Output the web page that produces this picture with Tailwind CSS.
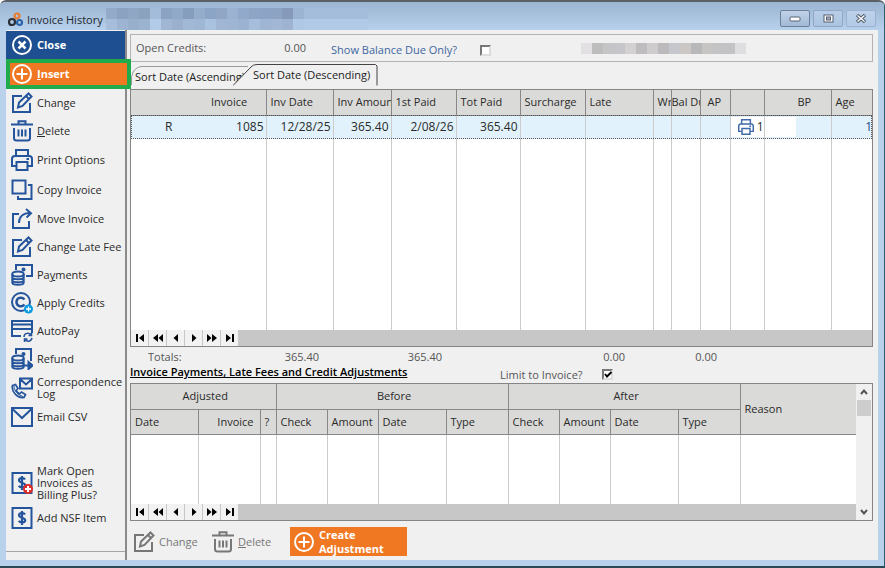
<!DOCTYPE html>
<html lang="en">
<head>
<meta charset="utf-8">
<title>Invoice History</title>
<script src="https://cdn.jsdelivr.net/npm/@tailwindcss/browser@4"></script>
</head>
<body class="font-['Open_Sans','Noto_Sans',sans-serif] text-[11px] leading-4 text-[#2a2a2a]">
<svg class="hidden" aria-hidden="true">
  <symbol id="i-edit" viewBox="0 0 22 22"><path d="M11 4H2v16h17v-9" /><path d="M7 15.500l1-5L17.500 1.500l3 3-9 9.500zM15 4l3 3" stroke-width="2"/></symbol>
  <symbol id="i-trash" viewBox="0 0 22 22"><path d="M0 4.500h22M7.500 4V1.200h7V4M3 8v10q0 2.500 2.500 2.500h11q2.500 0 2.500-2.500V8M7.500 9.500v7M11 9.500v7M14.500 9.500v7"/></symbol>
  <symbol id="i-print" viewBox="0 0 22 22"><path d="M5 6V1h12v5M5 17H1V10q0-3 3-3h14q3 0 3 3v7h-4M5.500 13h11v8h-11zM15.500 10h2.500"/></symbol>
  <symbol id="i-copy" viewBox="0 0 22 22"><path d="M1.500 1.500h13v13h-13zM17 6h3.500v14H7v-3"/></symbol>
  <symbol id="i-move" viewBox="0 0 22 22"><path d="M8 6H2v14h16v-7M8 15c0-6 4-10 11-10M15 1l5 4.200L15.500 9.500"/></symbol>
  <symbol id="i-coins" viewBox="0 0 22 22"><ellipse cx="7" cy="10" rx="5.700" ry="2.500"/><path d="M1.300 10v8.500c0 3 11.400 3 11.400 0V10M1.300 13c0 3 11.400 3 11.400 0M1.300 16c0 3 11.400 3 11.400 0"/></symbol>
  <symbol id="i-pay" viewBox="0 0 22 22"><path d="M5 6V1h16v11h-6"/><circle cx="12.500" cy="5.500" r="1" fill="currentColor"/><use href="#i-coins" width="22" height="22"/></symbol>
  <symbol id="i-refund" viewBox="0 0 22 22"><path d="M5 6V1h15v12"/><circle cx="12.500" cy="6" r="1" fill="currentColor"/><use href="#i-coins" width="22" height="22"/><path d="M12 17.500h8M17.500 14l4 3.500-4 3.500z" fill="currentColor"/></symbol>
  <symbol id="i-credit" viewBox="0 0 22 22"><circle cx="10" cy="10" r="9"/><path d="M13.500 7.500c-3-3.500-8-1.500-8 2.500s5 6 8 2.500" stroke-width="2.500"/><circle cx="17.500" cy="17" r="4.500" fill="#0a9be0" stroke="none"/><path d="M17.500 14.500v5M15 17h5" stroke="#fff" stroke-width="1.300"/></symbol>
  <symbol id="i-auto" viewBox="0 0 22 22"><path d="M10 16H1V1h20v15M1 4.500h20M1 9h20" /><path d="M13 13h9v9h-9z" fill="#f0f0f0" stroke="none"/><path d="M13 17c0-4 5-5 7-2M20.500 12.500v3h-3M21 18c-1 4-5 4-7 1.500M13.500 22v-3h3" stroke-width="1.500"/></symbol>
  <symbol id="i-corr" viewBox="0 0 22 22"><path d="M9 1.500h12v10H9zM9 2l6 5.500L21 2"/><path d="M1.500 8.500l3-1 2.500 4-2 2c1 1.500 2 2.500 3.500 3.500l2-2 4 2.500-1.500 3C7 21.500 0 15 1.500 8.500z" stroke-width="1.700"/><path d="M3 9c0 5 4 9 9 10.500" stroke-width="1"/></symbol>
  <symbol id="i-mail" viewBox="0 0 22 22"><path d="M1 2h20v18H1zM1.500 3l9.500 9L20.500 3"/></symbol>
  <symbol id="i-dollar" viewBox="0 0 22 22"><path d="M1.500 1h19v20h-19z"/><path d="M14 7.500c-1-2-6-2-6 .8 0 3 6.200 1.800 6.200 5 0 2.700-5.200 2.700-6.400.4M11 4v14" stroke-width="2.200"/></symbol>
  <symbol id="i-dollarplus" viewBox="0 0 22 22"><use href="#i-dollar" width="22" height="22"/><circle cx="17" cy="17" r="5" fill="#e02b2b" stroke="none"/><path d="M17 14v6M14 17h6" stroke="#fff" stroke-width="2"/></symbol>
  <symbol id="i-plus" viewBox="0 0 22 22"><circle cx="11" cy="11" r="9"/><path d="M11 5.500v11M5.500 11h11"/></symbol>
  <symbol id="i-x" viewBox="0 0 22 22"><circle cx="11" cy="11" r="9"/><path d="M7.500 7.500l7 7M14.500 7.500l-7 7" stroke-width="2.500"/></symbol>
  <symbol id="n-first" viewBox="0 0 12 10"><path d="M2 1v8h2V1zM10 1v8L5 5z"/></symbol>
  <symbol id="n-rew" viewBox="0 0 12 10"><path d="M6 1v8L1 5zM11 1v8L6.500 5z"/></symbol>
  <symbol id="n-prev" viewBox="0 0 12 10"><path d="M8 1v8L3.500 5z"/></symbol>
  <symbol id="n-next" viewBox="0 0 12 10"><path d="M4 1v8l4.500-4z"/></symbol>
  <symbol id="n-fwd" viewBox="0 0 12 10"><path d="M1 1v8l4.500-4zM6 1v8l5-4z"/></symbol>
  <symbol id="n-last" viewBox="0 0 12 10"><path d="M2 1v8l5-4zM8 1v8h2V1z"/></symbol>
</svg>

<div class="flex h-screen min-h-[560px] w-full flex-col overflow-hidden rounded-t-md border-t-2 border-r border-b-2 border-t-[#5d6066] border-r-[#27606e] border-b-[#2b4a55] bg-[#b9d1ea]">
  <header class="flex h-7 shrink-0 bg-linear-to-b from-[#9bb5d2] to-[#b7d0eb] pl-2">
    <h1 class="flex items-center gap-[3px] pt-2 text-[#23272e]">
      <svg class="size-4" viewBox="0 0 16 16" fill="none" stroke-width="2.200" aria-hidden="true"><circle cx="9" cy="4" r="2.500" stroke="#e8792e"/><circle cx="4" cy="10" r="3" stroke="#2b3038"/><circle cx="11.500" cy="10.500" r="2.500" stroke="#2a64a8"/></svg>
      <span class="w-[79px] whitespace-nowrap">Invoice History -</span>
    </h1>
    <div class="grid h-[22px] grid-cols-[repeat(19,11px)_53px] grid-rows-2 self-end" aria-hidden="true">
      <i class="bg-[#93abc8]"></i><i class="bg-[#8ba3c0]"></i><i class="bg-[#8fa7c4]"></i><i class="bg-[#8aa2be]"></i><i class="bg-[#a3bcda]"></i><i class="bg-[#8ba2c2]"></i><i class="bg-[#90a9c8]"></i><i class="bg-[#869ebd]"></i><i class="bg-[#94adcb]"></i><i class="bg-[#8ba5c6]"></i><i class="bg-[#90a6c4]"></i><i class="bg-[#9bb3d1]"></i><i class="bg-[#91a9ca]"></i><i class="bg-[#8fa5c5]"></i><i class="bg-[#8ca3c5]"></i><i class="bg-[#8da3c3]"></i><i class="bg-[#8799ba]"></i><i class="bg-[#9bb4d2]"></i><i class="bg-[#a3bddb]"></i><i class="bg-[#a3bddb]"></i>
      <i class="bg-[#a6bedb]"></i><i class="bg-[#9db5d2]"></i><i class="bg-[#98afcc]"></i><i class="bg-[#9bb3cf]"></i><i class="bg-[#b2cbe8]"></i><i class="bg-[#a0b6d3]"></i><i class="bg-[#9bb0cc]"></i><i class="bg-[#a2b9d6]"></i><i class="bg-[#9fb6d4]"></i><i class="bg-[#a9c2df]"></i><i class="bg-[#a0b6d4]"></i><i class="bg-[#9eb5d3]"></i><i class="bg-[#9bb2d2]"></i><i class="bg-[#a6bddb]"></i><i class="bg-[#9fb5d4]"></i><i class="bg-[#a1b7d5]"></i><i class="bg-[#9eb3d2]"></i><i class="bg-[#afc8e5]"></i><i class="bg-[#b1cae7]"></i><i class="bg-[#b1cae7]"></i>
    </div>
    <div class="ml-auto flex items-start gap-[3px] pt-2 pr-2">
      <button aria-label="Minimize" class="grid h-[17px] w-[30px] place-items-center rounded-xs border border-[#6c7f9c] bg-linear-to-b from-[#c0d2e8] to-[#a2bad6]"><svg class="h-[7px] w-3" viewBox="0 0 12 7"><rect x="1" y="2" width="10" height="4" rx="1" fill="#fff" stroke="#56606f"/></svg></button>
      <button aria-label="Maximize" class="grid h-[17px] w-[30px] place-items-center rounded-xs border border-[#8fa6c4] bg-linear-to-b from-[#b9cee8] to-[#abc4e0]"><svg class="h-[9px] w-[11px]" viewBox="0 0 11 9"><rect x="1" y="1" width="9" height="7" fill="#fff" stroke="#56606f"/><rect x="3.500" y="3" width="4" height="3" fill="#aac" stroke="#56606f"/></svg></button>
      <button aria-label="Close window" class="grid h-[17px] w-[30px] place-items-center rounded-xs border border-[#9ab1cf] bg-linear-to-b from-[#bdd2ea] to-[#b3cbe7]"><svg class="h-[9px] w-3" viewBox="0 0 12 9"><path d="M2 1l8 7M10 1L2 8" stroke="#56606f" stroke-width="3.500"/><path d="M2.500 1.500l7 6M9.500 1.500l-7 6" stroke="#fff" stroke-width="1.300"/></svg></button>
    </div>
  </header>

  <div class="mr-[6px] mb-[6px] ml-[6px] flex min-h-0 flex-1 bg-[#f0f0f0]">
    <aside class="flex w-[121px] shrink-0 flex-col border-r-2 border-[#8b8b8b] pt-px">
      <nav class="flex flex-1 flex-col border-b border-[#a5a5a5] [&_svg]:size-[22px] [&_svg]:shrink-0 [&_svg]:fill-none [&_svg]:stroke-current [&_svg]:stroke-2 [&_svg]:text-[#24549b] [&_button]:flex [&_button]:shrink-0 [&_button]:items-center [&_button]:gap-1 [&_button]:pl-[5px] [&_button]:text-left [&_button]:leading-3">
        <button class="h-7 bg-[#1d4f91] font-bold text-white"><svg class="text-white!"><use href="#i-x"/></svg>Close</button>
        <button class="relative z-10 -mr-[6px] h-[30px] border-4 border-[#22ab4b] bg-[#f07822] pl-px! font-bold text-white"><svg class="text-white!"><use href="#i-plus"/></svg><span><u>I</u>nsert</span></button>
        <button class="h-7"><svg><use href="#i-edit"/></svg>Change</button>
        <button class="h-7"><svg><use href="#i-trash"/></svg><span><u>D</u>elete</span></button>
        <button class="h-[30px]"><svg><use href="#i-print"/></svg>Print Options</button>
        <button class="h-[30px]"><svg><use href="#i-copy"/></svg>Copy Invoice</button>
        <button class="h-7"><svg><use href="#i-move"/></svg>Move Invoice</button>
        <button class="h-7"><svg><use href="#i-edit"/></svg><span class="whitespace-nowrap">Change Late Fee</span></button>
        <button class="h-7"><svg><use href="#i-pay"/></svg><span>Pa<u>y</u>ments</span></button>
        <button class="h-7"><svg><use href="#i-credit"/></svg>Apply Credits</button>
        <button class="h-7"><svg><use href="#i-auto"/></svg>AutoPay</button>
        <button class="h-7"><svg><use href="#i-refund"/></svg>Refund</button>
        <button class="h-[30px]"><svg><use href="#i-corr"/></svg><span>Correspondence<br>Log</span></button>
        <button class="h-7"><svg><use href="#i-mail"/></svg>Email CSV</button>
        <button class="mt-8 h-10"><svg><use href="#i-dollarplus"/></svg><span>Mark Open<br>Invoices as<br>Billing Plus?</span></button>
        <button class="h-[30px]"><svg><use href="#i-dollar"/></svg>Add NSF Item</button>
      </nav>
      <div class="h-2"></div>
    </aside>

    <main class="flex min-w-0 flex-1 flex-col pt-1 pr-[5px] pl-[3px]">
      <section class="flex h-7 shrink-0 items-center border border-[#b4b4b4] pl-[5px] text-[#555]">
        <span class="w-[136px]">Open Credits:</span>
        <output class="w-[34px] text-right">0.00</output>
        <label for="due" class="w-[150px] pt-1 pl-[25px] whitespace-nowrap text-[#3f66a0]">Show Balance Due Only?</label>
        <input id="due" type="checkbox" class="mt-1 ml-6 size-[11px] appearance-none border-2 border-t-[#777] border-r-[#ddd] border-b-[#ddd] border-l-[#777] bg-white">
        <div class="ml-auto mr-[126px] flex h-[11px] [&>i]:w-[11px]" aria-hidden="true"><i class="bg-[#e2e0e2]"></i><i class="bg-[#bdbdbd]"></i><i class="bg-[#c5c5c8]"></i><i class="bg-[#c6c6ca]"></i><i class="bg-[#d3d1d2]"></i><i class="bg-[#bebcbe]"></i><i class="bg-[#cecccc]"></i><i class="bg-[#bcbabc]"></i><i class="bg-[#c5c7cc]"></i><i class="bg-[#cbc7c5]"></i><i class="bg-[#b8b8bb]"></i><i class="bg-[#c7c5c4]"></i><i class="bg-[#c3c3c5]"></i><i class="bg-[#c3c3c5]"></i><i class="bg-[#dedee1]"></i></div>
      </section>

      <div role="tablist" class="flex h-[27px] shrink-0 pt-px text-[#222]">
        <button role="tab" class="relative h-6 w-[118px] pt-1 pl-[5px] text-left whitespace-nowrap"><svg class="absolute inset-0 size-full fill-none stroke-[#999]" viewBox="0 0 118 24"><path d="M1.500 22v-8Q3 5 11 3.500H118"/></svg>Sort Date (Ascending)</button>
        <button role="tab" aria-selected="true" class="relative -ml-[15px] h-6 w-[145px] text-left whitespace-nowrap"><svg class="absolute inset-0 size-full fill-[#f0f0f0] stroke-[#444]" viewBox="0 0 145 24"><path d="M0 22.500L18 4Q20 1.500 24 1.500H142.500L144 3V22.500"/></svg><span class="relative pl-5">Sort Date (Descending)</span></button>
      </div>

      <section class="flex min-h-0 flex-1 flex-col border border-[#858585]">
        <div class="min-h-0 flex-1 bg-white">
        <table class="h-full w-full table-fixed border-collapse [&_th]:border-r [&_th]:border-b [&_th]:border-[#888] [&_th]:p-0 [&_th]:pl-1 [&_th]:text-left [&_th]:font-normal [&_th]:whitespace-nowrap [&_th]:overflow-hidden [&_td]:border-r [&_td]:border-[#ccc] [&_td]:p-0 [&_td]:pr-[2px] [&_td]:text-right [&_th:last-child]:border-r-0 [&_td:last-child]:border-r-0">
          <colgroup><col class="w-[135px]"><col class="w-[67px]"><col class="w-[58px]"><col class="w-[65px]"><col class="w-[64px]"><col class="w-[65px]"><col class="w-[68px]"><col class="w-[18px]"><col class="w-[29px]"><col class="w-[30px]"><col class="w-[34px]"><col class="w-[67px]"><col></colgroup>
          <thead><tr class="h-[25px] bg-[#dadad8]"><th class="pl-20!">Invoice</th><th>Inv Date</th><th>Inv Amount</th><th>1st Paid</th><th>Tot Paid</th><th>Surcharge</th><th>Late</th><th>Wr</th><th class="pl-0!">Bal Due</th><th class="pl-[7px]!">AP</th><th></th><th class="pl-[33px]!">BP</th><th>Age</th></tr></thead>
          <tbody>
            <tr class="h-6 bg-[#e1f2fc] text-[12px] outline-1 -outline-offset-1 outline-dotted outline-[#555]"><td><div class="flex justify-between pl-[34px]"><span>R</span><span>1085</span></div></td><td>12/28/25</td><td>365.40</td><td>2/08/26</td><td>365.40</td><td></td><td></td><td></td><td></td><td></td><td class="pr-0!"><div class="flex h-5 items-center justify-between bg-white pl-[7px]"><svg class="size-4 fill-none stroke-[#3f69a8] stroke-2"><use href="#i-print"/></svg><span>1</span></div></td><td><div class="h-5 w-[31px] bg-white"></div></td><td class="pr-0! text-[#1c4f88]">1</td></tr>
            <tr><td></td><td></td><td></td><td></td><td></td><td></td><td></td><td></td><td></td><td></td><td></td><td></td><td></td></tr>
          </tbody>
        </table>
        </div>
        <div class="flex h-4 shrink-0 bg-[#c7c7c7] [&_button]:grid [&_button]:w-[18px] [&_button]:place-items-center [&_button]:border-r [&_button]:border-[#c7c7c7] [&_button]:bg-[#f2f2f2] [&_svg]:h-[10px] [&_svg]:w-3">
          <button aria-label="First"><svg><use href="#n-first"/></svg></button><button aria-label="Page back"><svg><use href="#n-rew"/></svg></button><button aria-label="Previous"><svg><use href="#n-prev"/></svg></button><button aria-label="Next"><svg><use href="#n-next"/></svg></button><button aria-label="Page forward"><svg><use href="#n-fwd"/></svg></button><button aria-label="Last"><svg><use href="#n-last"/></svg></button>
        </div>
      </section>

      <div class="flex h-[18px] shrink-0 items-center pt-[2px] pl-[18px] text-[#555]">
        <span class="w-[100px]">Totals:</span><output class="w-[71px] text-right">365.40</output><output class="w-[123px] text-right">365.40</output><output class="w-[183px] text-right">0.00</output><output class="w-[92px] text-right">0.00</output>
      </div>
      <div class="flex h-[18px] shrink-0 items-center text-[#555]">
        <h2 class="w-[370px] pb-1 font-semibold whitespace-nowrap text-black underline">Invoice Payments, Late Fees and Credit Adjustments</h2>
        <label for="limit" class="w-[102px] pt-px whitespace-nowrap">Limit to Invoice?</label>
        <span class="relative mt-px grid size-[11px] place-items-center"><input id="limit" type="checkbox" checked class="size-[11px] appearance-none border-2 border-t-[#777] border-r-[#ddd] border-b-[#ddd] border-l-[#777] bg-white"><svg class="pointer-events-none absolute inset-0 size-full fill-none stroke-black stroke-2" viewBox="0 0 11 11"><path d="M3 5l2 2.500L9.500 3"/></svg></span>
      </div>

      <section class="flex h-[138px] shrink-0 border border-[#858585]">
        <div class="flex min-w-0 flex-1 flex-col bg-white">
          <div class="min-h-0 flex-1">
          <table class="h-full w-full table-fixed border-collapse [&_th]:border-r [&_th]:border-b [&_th]:border-[#888] [&_th]:p-0 [&_th]:pl-1 [&_th]:text-left [&_th]:font-normal [&_th]:whitespace-nowrap [&_td]:border-r [&_td]:border-[#ccc] [&_td:last-child]:border-r-0">
            <colgroup><col class="w-[67px]"><col class="w-[62px]"><col class="w-[16px]"><col class="w-[51px]"><col class="w-[51px]"><col class="w-[68px]"><col class="w-[62px]"><col class="w-[51px]"><col class="w-[51px]"><col class="w-[68px]"><col class="w-[62px]"><col></colgroup>
            <thead class="bg-[#dadad8]">
              <tr class="h-[25px]"><th colspan="3" class="text-center!">Adjusted</th><th colspan="4" class="text-center!">Before</th><th colspan="4" class="text-center!">After</th><th rowspan="2" class="border-r-0!">Reason</th></tr>
              <tr class="h-[25px]"><th>Date</th><th class="pr-[6px]! text-right!">Invoice</th><th>?</th><th>Check</th><th>Amount</th><th>Date</th><th>Type</th><th>Check</th><th>Amount</th><th>Date</th><th>Type</th></tr>
            </thead>
            <tbody><tr><td></td><td></td><td></td><td></td><td></td><td></td><td></td><td></td><td></td><td></td><td></td><td></td></tr></tbody>
          </table>
          </div>
          <div class="flex h-4 shrink-0 bg-[#c7c7c7] [&_button]:grid [&_button]:w-[18px] [&_button]:place-items-center [&_button]:border-r [&_button]:border-[#c7c7c7] [&_button]:bg-[#f2f2f2] [&_svg]:h-[10px] [&_svg]:w-3">
            <button aria-label="First"><svg><use href="#n-first"/></svg></button><button aria-label="Page back"><svg><use href="#n-rew"/></svg></button><button aria-label="Previous"><svg><use href="#n-prev"/></svg></button><button aria-label="Next"><svg><use href="#n-next"/></svg></button><button aria-label="Page forward"><svg><use href="#n-fwd"/></svg></button><button aria-label="Last"><svg><use href="#n-last"/></svg></button>
          </div>
        </div>
        <div class="flex w-4 shrink-0 flex-col px-px [&_svg]:h-2 [&_svg]:w-2 [&_svg]:fill-none [&_svg]:stroke-[#555] [&_svg]:stroke-2 [&_button]:grid [&_button]:h-4 [&_button]:place-items-center">
          <button aria-label="Scroll up"><svg viewBox="0 0 8 8"><path d="M1 6l3-3.500L7 6"/></svg></button>
          <div class="h-4 bg-[#cdcdcd]"></div>
          <button aria-label="Scroll down" class="mt-auto"><svg viewBox="0 0 8 8"><path d="M1 2l3 3.500L7 2"/></svg></button>
        </div>
      </section>

      <footer class="flex shrink-0 items-center pt-[6px] pb-1 pl-[3px] text-[#777] [&_svg]:size-[22px] [&_svg]:shrink-0 [&_svg]:fill-none [&_svg]:stroke-current [&_svg]:stroke-2 [&_button]:flex [&_button]:items-center [&_button]:gap-1 [&_button]:text-left">
        <button class="w-[79px]"><svg><use href="#i-edit"/></svg>Change</button>
        <button class="w-[78px]"><svg><use href="#i-trash"/></svg><span><u>D</u>elete</span></button>
        <button class="h-[29px] w-[117px] bg-[#f07822] pl-[3px] leading-[14px] font-bold text-white"><svg><use href="#i-plus"/></svg>Create<br>Adjustment</button>
      </footer>
    </main>
  </div>
</div>
</body>
</html>
